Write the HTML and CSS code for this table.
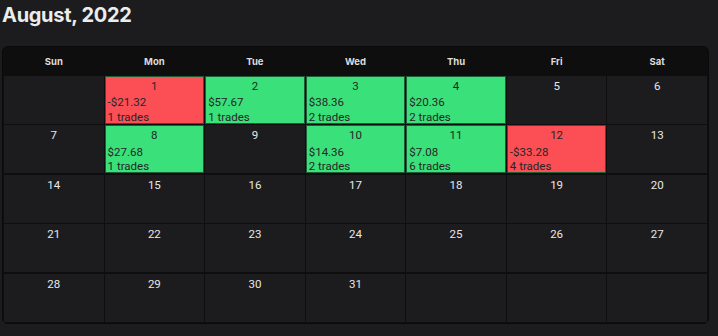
FILE: index.html
```html
<!DOCTYPE html>
<html>
<head>
<meta charset="utf-8">
<link rel="stylesheet" href="styles.css">
</head>
<body>
<h1 class="title">August, 2022</h1>
<div class="calendar">
  <div class="head">Sun</div><div class="head">Mon</div><div class="head">Tue</div><div class="head">Wed</div><div class="head">Thu</div><div class="head">Fri</div><div class="head">Sat</div>

  <div class="cell"></div>
  <div class="cell loss"><div class="num">1</div><div class="info">-$21.32</div><div class="info">1 trades</div></div>
  <div class="cell win"><div class="num">2</div><div class="info">$57.67</div><div class="info">1 trades</div></div>
  <div class="cell win"><div class="num">3</div><div class="info">$38.36</div><div class="info">2 trades</div></div>
  <div class="cell win"><div class="num">4</div><div class="info">$20.36</div><div class="info">2 trades</div></div>
  <div class="cell"><div class="num">5</div></div>
  <div class="cell"><div class="num">6</div></div>

  <div class="cell"><div class="num">7</div></div>
  <div class="cell win"><div class="num">8</div><div class="info">$27.68</div><div class="info">1 trades</div></div>
  <div class="cell"><div class="num">9</div></div>
  <div class="cell win"><div class="num">10</div><div class="info">$14.36</div><div class="info">2 trades</div></div>
  <div class="cell win"><div class="num">11</div><div class="info">$7.08</div><div class="info">6 trades</div></div>
  <div class="cell loss"><div class="num">12</div><div class="info">-$33.28</div><div class="info">4 trades</div></div>
  <div class="cell"><div class="num">13</div></div>

  <div class="cell"><div class="num">14</div></div>
  <div class="cell"><div class="num">15</div></div>
  <div class="cell"><div class="num">16</div></div>
  <div class="cell"><div class="num">17</div></div>
  <div class="cell"><div class="num">18</div></div>
  <div class="cell"><div class="num">19</div></div>
  <div class="cell"><div class="num">20</div></div>

  <div class="cell"><div class="num">21</div></div>
  <div class="cell"><div class="num">22</div></div>
  <div class="cell"><div class="num">23</div></div>
  <div class="cell"><div class="num">24</div></div>
  <div class="cell"><div class="num">25</div></div>
  <div class="cell"><div class="num">26</div></div>
  <div class="cell"><div class="num">27</div></div>

  <div class="cell"><div class="num">28</div></div>
  <div class="cell"><div class="num">29</div></div>
  <div class="cell"><div class="num">30</div></div>
  <div class="cell"><div class="num">31</div></div>
  <div class="cell"></div>
  <div class="cell"></div>
  <div class="cell"></div>
</div>
</body>
</html>
```
FILE: styles.css
```css
html, body {
  margin: 0;
  background: #1c1c1e;
}
body {
  padding: 0 9px 0 2px;
  font-family: "Roboto", "Liberation Sans", sans-serif;
  color: #e6e6e6;
}
.title {
  margin: 0;
  padding-top: 3px;
  height: 46px;
  box-sizing: border-box;
  font-family: "Inter", "Liberation Sans", sans-serif;
  font-size: 20px;
  font-weight: 700;
  color: #ececec;
  line-height: 24px;
  letter-spacing: -0.3px;
}
.calendar {
  display: grid;
  grid-template-columns: repeat(7, 1fr);
  grid-template-rows: 27px repeat(5, 48px);
  column-gap: 1px;
  row-gap: 1.5px;
  padding: 0 1px 1px;
  background: #0e0e0f;
  border: 1px solid #0a0a0a;
  border-radius: 6px;
}
.head {
  display: flex;
  align-items: center;
  justify-content: center;
  font-family: "Inter", "Liberation Sans", sans-serif;
  font-size: 9.5px;
  font-weight: 700;
  color: #dcdcdc;
  margin-bottom: -1.5px;
}
.cell {
  background: #1c1c1f;
  box-sizing: border-box;
  padding: 3px 3px 0;
  font-size: 11.5px;
  line-height: 14.5px;
}
.num {
  text-align: center;
  color: #e8e8e8;
  margin-bottom: 2px;
}
.win, .loss {
  border: 1px solid #1f5c38;
  padding: 2px 2px 0;
}
.win { background: #3ae07a; }
.loss { background: #fc4e55; }
.win .num, .loss .num, .info {
  color: #262626;
  font-weight: 400;
}
.info {
  white-space: nowrap;
}
```
